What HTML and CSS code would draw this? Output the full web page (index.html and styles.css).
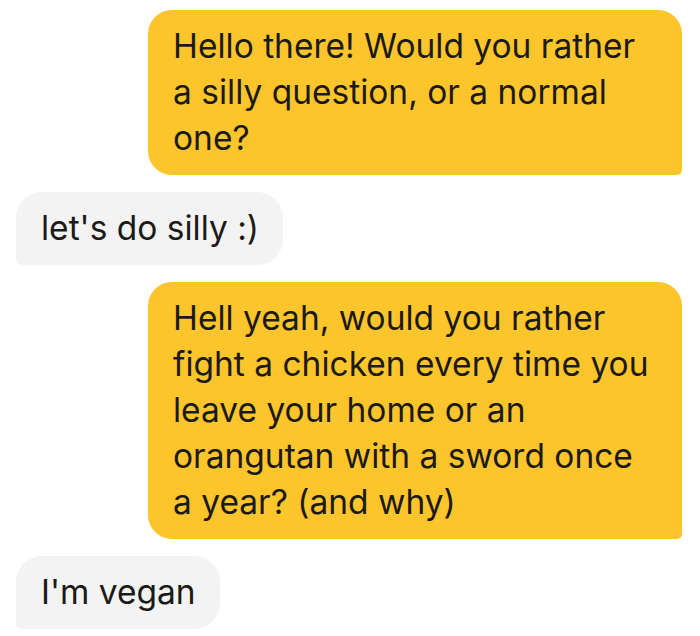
FILE: index.html
```html
<!DOCTYPE html>
<html><head><meta charset="utf-8"><link rel="stylesheet" href="styles.css"></head>
<body>
<div class="chat">
  <div class="msg out">Hello there! Would you rather a silly question, or a normal one?</div>
  <div class="msg in">let's do silly :)</div>
  <div class="msg out">Hell yeah, would you rather fight a chicken every time you leave your home or an orangutan with a sword once a year? (and why)</div>
  <div class="msg in">I'm vegan</div>
</div>
</body></html>
```
FILE: styles.css
```css
html,body{margin:0;background:#ffffff;}
.chat{
  display:flex;
  flex-direction:column;
  gap:17px;
  padding:10px 18px 0 16px;
  font-family:"Inter","Liberation Sans",sans-serif;
  font-size:33.5px;
  line-height:46px;
  color:#1c1a17;
}
.msg{
  box-sizing:border-box;
  max-width:534px;
  padding:13px 24px 14px 25px;
}
.out{
  align-self:flex-end;
  width:534px;
  background:#fdc52c;
  border-radius:24px 24px 5px 24px;
}
.in{
  align-self:flex-start;
  background:#f3f3f3;
  border-radius:26px 26px 26px 6px;
}
```
